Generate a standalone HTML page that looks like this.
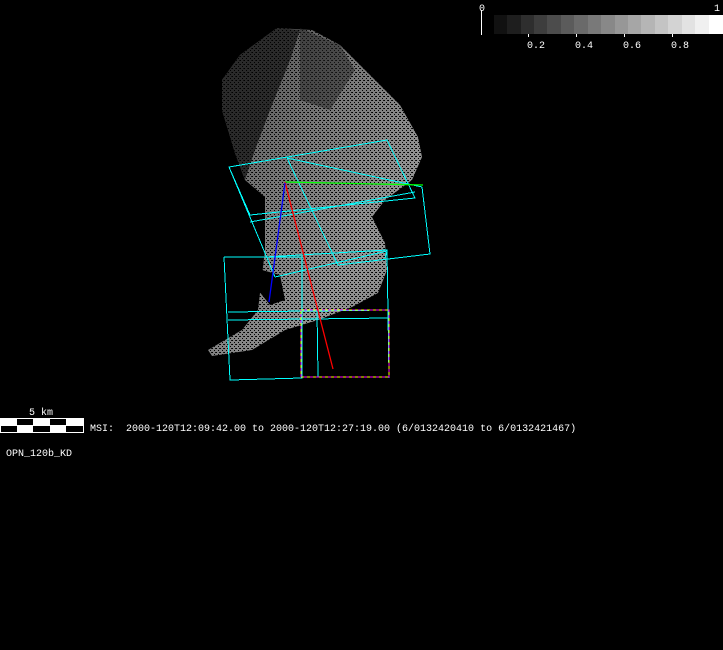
<!DOCTYPE html>
<html><head><meta charset="utf-8"><style>
html,body{margin:0;padding:0;background:#000;width:723px;height:650px;overflow:hidden}
svg{display:block}
text{font-family:"Liberation Mono",monospace;fill:#fff;font-size:10px}
</style></head><body>
<svg width="723" height="650" viewBox="0 0 723 650" xmlns="http://www.w3.org/2000/svg">
<defs>
<linearGradient id="g1" x1="0" y1="0" x2="1" y2="1">
<stop offset="0" stop-color="#444"/><stop offset="0.4" stop-color="#777"/><stop offset="0.7" stop-color="#929292"/><stop offset="1" stop-color="#808080"/>
</linearGradient>
<pattern id="dots" width="4" height="4" patternUnits="userSpaceOnUse">
<rect x="0" y="0" width="1" height="1" fill="#000"/><rect x="2" y="2" width="1" height="1" fill="#000"/><rect x="3" y="0" width="1" height="1" fill="#111"/>
</pattern>
</defs>
<g shape-rendering="crispEdges">
<rect x="494" y="15" width="14" height="19" fill="#111"/>
<rect x="507" y="15" width="14" height="19" fill="#1e1e1e"/>
<rect x="521" y="15" width="14" height="19" fill="#2e2e2e"/>
<rect x="534" y="15" width="14" height="19" fill="#3d3d3d"/>
<rect x="547" y="15" width="14" height="19" fill="#4c4c4c"/>
<rect x="561" y="15" width="14" height="19" fill="#5b5b5b"/>
<rect x="574" y="15" width="14" height="19" fill="#6a6a6a"/>
<rect x="588" y="15" width="14" height="19" fill="#797979"/>
<rect x="601" y="15" width="14" height="19" fill="#888"/>
<rect x="615" y="15" width="14" height="19" fill="#979797"/>
<rect x="628" y="15" width="14" height="19" fill="#a6a6a6"/>
<rect x="641" y="15" width="14" height="19" fill="#b5b5b5"/>
<rect x="655" y="15" width="14" height="19" fill="#c4c4c4"/>
<rect x="668" y="15" width="14" height="19" fill="#d3d3d3"/>
<rect x="682" y="15" width="14" height="19" fill="#e2e2e2"/>
<rect x="695" y="15" width="14" height="19" fill="#f0f0f0"/>
<rect x="709" y="15" width="14" height="19" fill="#fff"/>
<rect x="481" y="10" width="1" height="25" fill="#fff"/>
<rect x="528" y="34" width="1" height="3" fill="#fff"/>
<rect x="576" y="34" width="1" height="3" fill="#fff"/>
<rect x="624" y="34" width="1" height="3" fill="#fff"/>
<rect x="672" y="34" width="1" height="3" fill="#fff"/>
</g>
<text x="479" y="11">0</text>
<text x="714" y="11">1</text>
<text x="527" y="48">0.2</text>
<text x="575" y="48">0.4</text>
<text x="623" y="48">0.6</text>
<text x="671" y="48">0.8</text>
<path d="M222,80 L240,55 L277,28 L312,30 L340,45 L372,77 L400,105 L418,137 L422,157 L412,180 L385,200 L372,217 L385,243 L387,270 L378,293 L352,307 L318,320 L285,330 L252,350 L212,356 L208,350 L242,330 L258,310 L265,250 L265,197 L245,180 L235,153 L222,110 Z" fill="url(#g1)"/>
<path d="M222,80 L240,55 L277,28 L300,30 L290,60 L270,110 L255,150 L245,180 L235,153 L222,110 Z" fill="#2a2a2a"/>
<path d="M222,80 L240,55 L277,28 L312,30 L340,45 L372,77 L400,105 L418,137 L422,157 L412,180 L385,200 L372,217 L385,243 L387,270 L378,293 L352,307 L318,320 L285,330 L252,350 L212,356 L208,350 L242,330 L258,310 L265,250 L265,197 L245,180 L235,153 L222,110 Z" fill="url(#dots)"/>
<path d="M262,270 L280,275 L285,300 L270,305 L258,290 Z" fill="#000"/>
<path d="M300,28 L340,45 L355,70 L330,110 L300,100 Z" fill="#222" opacity="0.5"/>
<g stroke="#0ff" stroke-width="1" fill="none" shape-rendering="crispEdges">
<path d="M229,167 L387,140 L415,198 L250,215 Z"/>
<path d="M229,167 L275,277"/>
<path d="M287,158 L338,265 L430,254 L422,187"/>
<path d="M287,158 L422,187"/>
<path d="M250,222 L415,192"/>
<path d="M275,277 L387,251 L385,258"/>
<path d="M224,257 L302,257 L302,378 L230,380 L224,257"/>
<path d="M265,257 L387,250 L389,378"/>
<path d="M228,312 L389,310"/>
<path d="M228,320 L389,318"/>
<path d="M317,310 L318,377"/>
</g>
<g fill="none" stroke-dasharray="3,3" shape-rendering="crispEdges">
<path d="M301,310 L389,310 L389,377 L301,377 Z" stroke="#ff0"/>
<path d="M301,310 L389,310 L389,377 L301,377 Z" stroke="#f0f" stroke-dashoffset="3"/>
</g>
<path d="M285,182 L423,185" stroke="#0f0" stroke-width="1.3"/>
<path d="M285,182 L333,369" stroke="#f00" stroke-width="1.3"/>
<path d="M285,183 L269,302" stroke="#00f" stroke-width="1.3"/>
<g shape-rendering="crispEdges">
<rect x="0" y="418" width="84" height="15" fill="#fff"/>
<rect x="17" y="419" width="16" height="6" fill="#000"/>
<rect x="50" y="419" width="16" height="6" fill="#000"/>
<rect x="1" y="426" width="16" height="6" fill="#000"/>
<rect x="33" y="426" width="17" height="6" fill="#000"/>
<rect x="66" y="426" width="17" height="6" fill="#000"/>
</g>
<text x="29" y="415">5 km</text>
<text x="90" y="431" xml:space="preserve">MSI:  2000-120T12:09:42.00 to 2000-120T12:27:19.00 (6/0132420410 to 6/0132421467)</text>
<text x="6" y="456">OPN_120b_KD</text>
</svg>
</body></html>
